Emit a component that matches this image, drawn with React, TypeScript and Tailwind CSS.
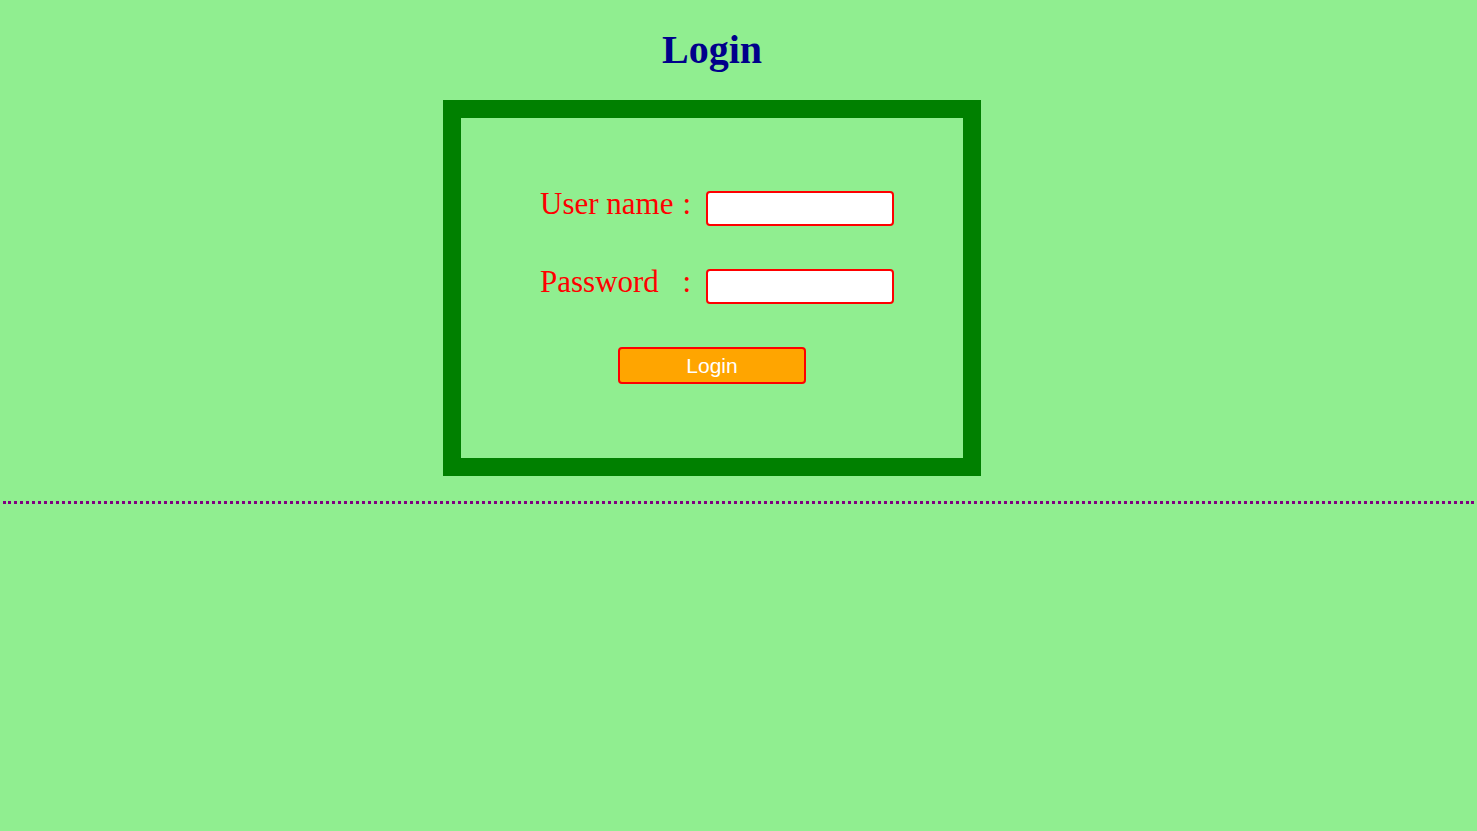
import type { ReactNode } from "react";

const serif = "font-['Liberation_Serif','Times_New_Roman',serif]";

function Field({ label, type }: { label: ReactNode; type: string }) {
  return (
    <div className="flex h-[35px] items-center">
      <label className={`flex w-[151px] justify-between pb-[11px] text-[31px] leading-none text-[#ff0000] ${serif}`}>
        <span>{label}</span>
        <span>:</span>
      </label>
      <input
        type={type}
        className="ml-[15px] h-[35px] w-[188px] rounded-[4px] border-2 border-[#ff0000] bg-white px-1 outline-none"
      />
    </div>
  );
}

export default function App() {
  return (
    <div className="min-h-[831px] bg-[#90ee90]">
      <div className="flex w-[1424px] flex-col items-center">
        <h1 className={`mt-[28px] text-[40px] font-bold leading-[44px] text-[#00008b] ${serif}`}>Login</h1>
        <form
          className="mt-[28px] flex h-[376px] w-[538px] flex-col items-center border-[18px] border-[#008000] pt-[73px]"
          onSubmit={(e) => e.preventDefault()}
        >
          <div className="ml-[10px] flex flex-col gap-[43px]">
            <Field label="User name" type="text" />
            <Field label="Password" type="password" />
          </div>
          <button
            type="submit"
            className="mt-[43px] h-[37px] w-[188px] rounded-[4px] border-2 border-[#ff0000] bg-[#ffa500] font-['Liberation_Sans',Arial,sans-serif] text-[21px] leading-none text-white"
          >
            Login
          </button>
        </form>
      </div>
      <hr className="mx-[3px] mt-[25px] border-t-[3px] border-dotted border-[#800080]" />
    </div>
  );
}
